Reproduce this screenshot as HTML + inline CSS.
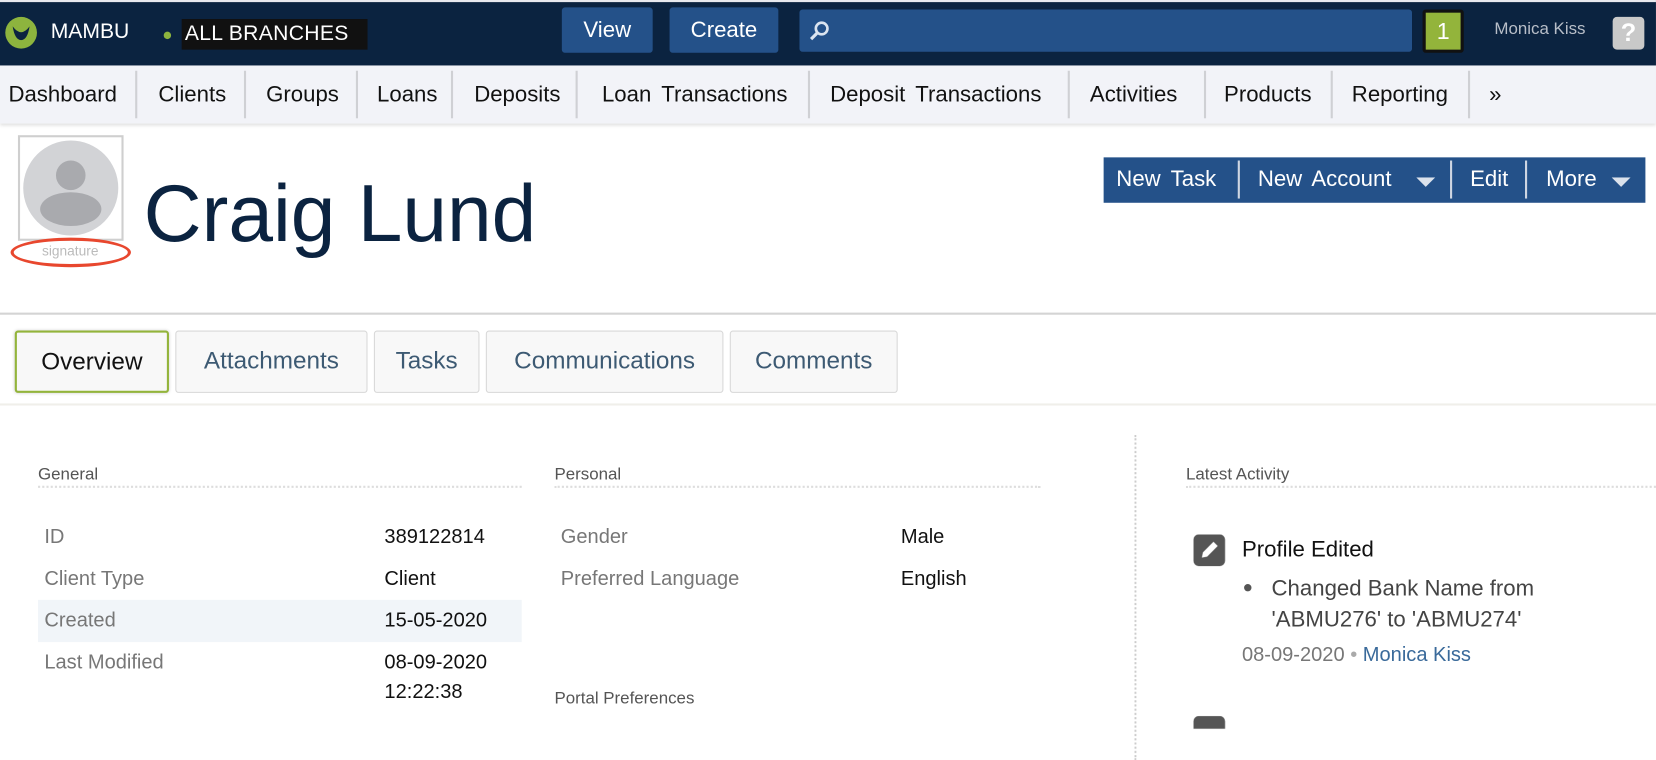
<!DOCTYPE html>
<html><head><meta charset="utf-8"><style>
*{margin:0;padding:0;box-sizing:border-box}
body{width:1656px;height:720px;overflow:hidden;background:#fff;font-family:"Liberation Sans",sans-serif;position:relative}
#w{position:absolute;left:0;top:0;width:1568px;height:682px;transform:scale(1.0561);transform-origin:0 0}
.a{position:absolute;white-space:nowrap}
.top{position:absolute;left:0;top:0;width:1568px;height:62px;background:#0b2340;border-top:2px solid #e8e9ee}
.nav{position:absolute;left:0;top:62px;width:1568px;height:55px;background:#f2f3f8;box-shadow:0 2px 3px rgba(0,0,0,.12)}
.nav span{position:absolute;top:16px;font-size:21px;color:#111}
.sep{position:absolute;top:5px;width:2px;height:45px;background:#cfd0d4}
.tab{position:absolute;top:313px;height:59px;border:1px solid #d8d8d8;border-radius:3px;background:#f8f8f8;color:#3d5a73;font-size:23px;text-align:center;line-height:55px}
.lbl{font-size:19px;color:#777}
.val{font-size:19px;color:#111}
.hd{font-size:16px;color:#555}
.dot{position:absolute;height:0;border-top:2px dotted #ddd}
</style></head><body><div id="w">
<div class="top"></div>
<svg class="a" style="left:4px;top:14px" width="32" height="34" viewBox="0 0 32 34"><circle cx="16" cy="17" r="15" fill="#8db43e"/><path d="M8 11 Q16 22 24 11 Q22 24 16 24 Q10 24 8 11Z" fill="#0b2340"/></svg>
<div class="a" style="left:48px;top:19px;font-size:20px;color:#fff">MAMBU</div>
<div class="a" style="left:155px;top:30px;width:7px;height:7px;border-radius:50%;background:#8db43e"></div>
<div class="a" style="left:172px;top:18px;height:29px;background:#111;color:#fff;font-size:20px;line-height:29px;padding:0 3px;width:176px;letter-spacing:.3px">ALL BRANCHES</div>
<div class="a" style="left:532px;top:7px;width:86px;height:43px;background:#245189;border-radius:3px;color:#fff;font-size:21px;text-align:center;line-height:43px">View</div>
<div class="a" style="left:634px;top:7px;width:103px;height:43px;background:#245189;border-radius:3px;color:#fff;font-size:21px;text-align:center;line-height:43px">Create</div>
<div class="a" style="left:757px;top:9px;width:580px;height:40px;background:#245189;border-radius:3px"></div>
<svg class="a" style="left:765px;top:18px" width="22" height="22" viewBox="0 0 22 22"><circle cx="13" cy="9" r="5.5" fill="none" stroke="#dbe4f0" stroke-width="2.5"/><path d="M9 13 L3 19" stroke="#dbe4f0" stroke-width="3"/></svg>
<div class="a" style="left:1347px;top:9px;width:39px;height:41px;background:#111;border-radius:3px"></div>
<div class="a" style="left:1350px;top:12px;width:33px;height:35px;background:#93b43b;color:#fff;font-size:22px;text-align:center;line-height:35px">1</div>
<div class="a" style="left:1415px;top:19px;font-size:16px;color:#b8bec8">Monica Kiss</div>
<div class="a" style="left:1527px;top:16px;width:30px;height:31px;background:#c9c9c9;border-radius:4px;color:#fff;font-size:24px;font-weight:bold;text-align:center;line-height:31px">?</div>
<div class="nav">
<span style="left:8px">Dashboard</span><div class="sep" style="left:128px"></div>
<span style="left:150px">Clients</span><div class="sep" style="left:231px"></div>
<span style="left:252px">Groups</span><div class="sep" style="left:337px"></div>
<span style="left:357px">Loans</span><div class="sep" style="left:427px"></div>
<span style="left:449px">Deposits</span><div class="sep" style="left:545px"></div>
<span style="left:570px;word-spacing:4px">Loan Transactions</span><div class="sep" style="left:765px"></div>
<span style="left:786px;word-spacing:4px">Deposit Transactions</span><div class="sep" style="left:1011px"></div>
<span style="left:1032px">Activities</span><div class="sep" style="left:1140px"></div>
<span style="left:1159px">Products</span><div class="sep" style="left:1260px"></div>
<span style="left:1280px">Reporting</span><div class="sep" style="left:1390px"></div>
<span style="left:1410px">»</span>
</div>
<div class="a" style="left:17px;top:128px;width:100px;height:100px;border:2px solid #cfcfcf"></div>
<svg class="a" style="left:21px;top:132px" width="92" height="92" viewBox="0 0 92 92"><circle cx="46" cy="46" r="45" fill="#d2d3d6"/><circle cx="46" cy="34" r="14" fill="#a9aaae"/><ellipse cx="46" cy="66" rx="29" ry="16" fill="#a9aaae"/></svg>
<div class="a" style="left:18px;top:230px;width:97px;text-align:center;font-size:13px;color:#bbb">signature</div>
<div class="a" style="left:10px;top:225px;width:114px;height:28px;border:3px solid #e8472e;border-radius:50%"></div>
<div class="a" style="left:136px;top:158px;font-size:76px;color:#0b2340;line-height:90px">Craig Lund</div>
<div class="a" style="left:1045px;top:149px;width:513px;height:43px;background:#245189"></div>
<div class="a" style="left:1057px;top:158px;font-size:21px;color:#fff;word-spacing:4px">New Task</div>
<div class="a" style="left:1172px;top:152px;width:2px;height:36px;background:#cfd6e2"></div>
<div class="a" style="left:1191px;top:158px;font-size:21px;color:#fff;word-spacing:4px">New Account</div>
<svg class="a" style="left:1341px;top:168px" width="20" height="10"><path d="M0 0H18L9 9Z" fill="#dbe2ec"/></svg>
<div class="a" style="left:1373px;top:152px;width:2px;height:36px;background:#cfd6e2"></div>
<div class="a" style="left:1392px;top:158px;font-size:21px;color:#fff">Edit</div>
<div class="a" style="left:1444px;top:152px;width:2px;height:36px;background:#cfd6e2"></div>
<div class="a" style="left:1464px;top:158px;font-size:21px;color:#fff">More</div>
<svg class="a" style="left:1526px;top:168px" width="20" height="10"><path d="M0 0H18L9 9Z" fill="#dbe2ec"/></svg>
<div class="a" style="left:0;top:296px;width:1568px;height:2px;background:#d4d4d4"></div>
<div class="tab" style="left:14px;width:146px;border:2px solid #93b43b;color:#111;box-shadow:0 0 3px rgba(0,0,0,.2)">Overview</div>
<div class="tab" style="left:166px;width:182px">Attachments</div>
<div class="tab" style="left:354px;width:100px">Tasks</div>
<div class="tab" style="left:460px;width:225px">Communications</div>
<div class="tab" style="left:691px;width:159px">Comments</div>
<div class="a" style="left:0;top:382px;width:1568px;height:2px;background:#f0efea"></div>
<div class="a hd" style="left:36px;top:441px">General</div>
<div class="dot" style="left:36px;top:460px;width:458px"></div>
<div class="a hd" style="left:525px;top:441px">Personal</div>
<div class="dot" style="left:525px;top:460px;width:460px"></div>
<div class="a" style="left:1074px;top:412px;height:308px;border-left:2px dotted #ccc"></div>
<div class="a hd" style="left:1123px;top:441px">Latest Activity</div>
<div class="dot" style="left:1123px;top:460px;width:445px"></div>
<div class="a" style="left:36px;top:568px;width:458px;height:40px;background:#f1f5f9"></div>
<div class="a lbl" style="left:42px;top:498px">ID</div><div class="a val" style="left:364px;top:498px">389122814</div>
<div class="a lbl" style="left:42px;top:538px">Client Type</div><div class="a val" style="left:364px;top:538px">Client</div>
<div class="a lbl" style="left:42px;top:577px">Created</div><div class="a val" style="left:364px;top:577px">15-05-2020</div>
<div class="a lbl" style="left:42px;top:617px">Last Modified</div><div class="a val" style="left:364px;top:614px;line-height:28px">08-09-2020<br>12:22:38</div>
<div class="a lbl" style="left:531px;top:498px">Gender</div><div class="a val" style="left:853px;top:498px">Male</div>
<div class="a lbl" style="left:531px;top:538px">Preferred Language</div><div class="a val" style="left:853px;top:538px">English</div>
<div class="a hd" style="left:525px;top:653px">Portal Preferences</div>
<svg class="a" style="left:1130px;top:506px" width="30" height="30" viewBox="0 0 30 30"><rect width="30" height="30" rx="5" fill="#555"/><path d="M8 22 L9 17 L19 7 L23 11 L13 21 Z" fill="#fff"/></svg>
<svg class="a" style="left:1130px;top:678px" width="30" height="12"><rect width="30" height="30" rx="5" fill="#555"/></svg>
<div class="a" style="left:1176px;top:509px;font-size:21px;color:#111">Profile Edited</div>
<div class="a" style="left:1178px;top:553px;width:7px;height:7px;border-radius:50%;background:#555"></div>
<div class="a" style="left:1204px;top:543px;font-size:21px;color:#444;line-height:29px">Changed Bank Name from<br>'ABMU276' to 'ABMU274'</div>
<div class="a" style="left:1176px;top:610px;font-size:19px;color:#777">08-09-2020 <span style="color:#aaa">•</span> <span style="color:#3a6a9a">Monica Kiss</span></div>
</div></body></html>
